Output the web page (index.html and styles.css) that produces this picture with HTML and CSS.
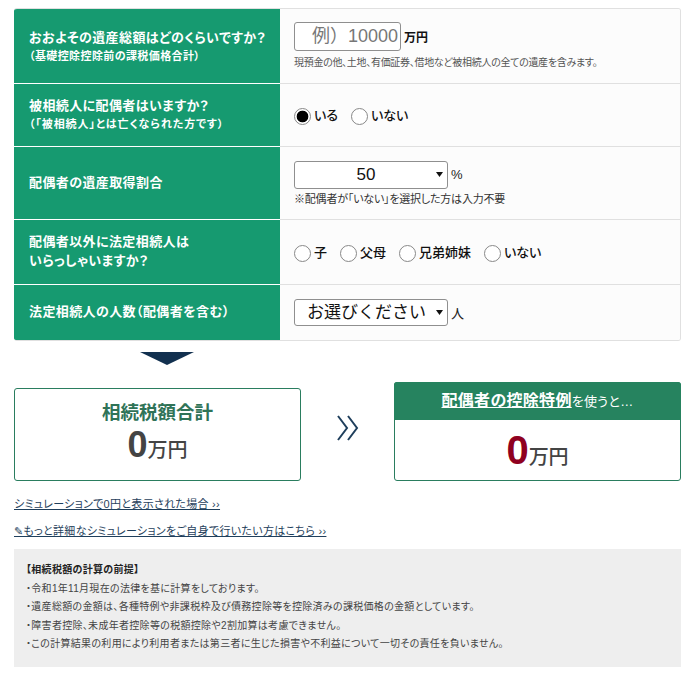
FILE: index.html
```html
<!DOCTYPE html>
<html lang="ja">
<head>
    <meta charset="UTF-8">
    <title>相続税額シミュレーション</title>
    <link rel="stylesheet" href="styles.css">
</head>
<body>
    <div class="sim-table">
        <div class="row row-1">
            <div class="label">おおよその遺産総額はどのくらいですか？<span class="sub">（基礎控除控除前の課税価格合計）</span></div>
            <div class="field">
                <div class="line">
                    <input class="amount" type="text" placeholder="例）10000">
                    <span class="unit">万円</span>
                </div>
                <p class="help help-gap">現預金の他、土地、有価証券、借地など被相続人の全ての遺産を含みます。</p>
            </div>
        </div>
        <div class="row row-2">
            <div class="label">被相続人に配偶者はいますか？<span class="sub">（「被相続人」とは亡くなられた方です）</span></div>
            <div class="field">
                <div class="radios">
                    <label class="radio"><input type="radio" name="spouse" checked>いる</label>
                    <label class="radio"><input type="radio" name="spouse">いない</label>
                </div>
            </div>
        </div>
        <div class="row row-3">
            <div class="label">配偶者の遺産取得割合</div>
            <div class="field">
                <div class="line">
                    <select class="ratio"><option>50</option></select>
                    <span class="unit plain">%</span>
                </div>
                <p class="help note">※配偶者が「いない」を選択した方は入力不要</p>
            </div>
        </div>
        <div class="row row-4">
            <div class="label">配偶者以外に法定相続人は<br>いらっしゃいますか？</div>
            <div class="field">
                <div class="radios">
                    <label class="radio"><input type="radio" name="heir">子</label>
                    <label class="radio"><input type="radio" name="heir">父母</label>
                    <label class="radio"><input type="radio" name="heir">兄弟姉妹</label>
                    <label class="radio"><input type="radio" name="heir">いない</label>
                </div>
            </div>
        </div>
        <div class="row row-5">
            <div class="label">法定相続人の人数（配偶者を含む）</div>
            <div class="field">
                <div class="line">
                    <select class="people"><option>お選びください</option></select>
                    <span class="unit plain">人</span>
                </div>
            </div>
        </div>
    </div>

    <div class="down-arrow"></div>

    <div class="results">
        <div class="result-box">
            <div class="result-title">相続税額合計</div>
            <div class="result-value"><b>0</b>万円</div>
        </div>
        <svg class="chevrons" width="24" height="26" viewBox="0 0 24 26">
            <path d="M2 1 L11 13 L2 25 M12 1 L21 13 L12 25" fill="none" stroke="#1f3f5c" stroke-width="2"/>
        </svg>
        <div class="result-box special">
            <div class="special-head"><a href="#">配偶者の控除特例</a><span>を使うと…</span></div>
            <div class="result-value"><b>0</b>万円</div>
        </div>
    </div>

    <p class="link-line"><a href="#">シミュレーションで0円と表示された場合 ››</a></p>
    <p class="link-line second"><a href="#">✎もっと詳細なシミュレーションをご自身で行いたい方はこちら ››</a></p>

    <div class="notes">
        <p class="notes-title">【相続税額の計算の前提】</p>
        <p>・令和1年11月現在の法律を基に計算をしております。</p>
        <p>・遺産総額の金額は、各種特例や非課税枠及び債務控除等を控除済みの課税価格の金額としています。</p>
        <p>・障害者控除、未成年者控除等の税額控除や2割加算は考慮できません。</p>
        <p>・この計算結果の利用により利用者または第三者に生じた損害や不利益について一切その責任を負いません。</p>
    </div>
</body>
</html>
```

FILE: styles.css
```css
body {
    margin: 0;
    padding: 8px 16px 0 14px;
    background: #fff;
    color: #333;
    font-family: "Liberation Sans", "Noto Sans CJK JP", sans-serif;
    font-feature-settings: "palt";
}
p {
    margin: 0;
}
.sim-table {
    border: 1px solid #e0e0e0;
    border-left: 0;
    border-radius: 3px;
    overflow: hidden;
}
.row {
    display: flex;
    border-bottom: 1px solid #e0e0e0;
}
.row:last-child {
    border-bottom: 0;
}
.row-1 { height: 74px; }
.row-2 { height: 62px; }
.row-3 { height: 72px; }
.row-4 { height: 64px; }
.row-5 { height: 55px; }
.label {
    width: 266px;
    flex-shrink: 0;
    box-sizing: border-box;
    margin-bottom: -1px;
    padding: 0 0 0 15px;
    background: #169a70;
    border-bottom: 1px solid #fff;
    color: #fff;
    font-size: 13px;
    font-weight: bold;
    line-height: 19px;
    letter-spacing: 0.4px;
    white-space: nowrap;
}
.row-1 .label { padding-top: 19px; }
.row-2 .label { padding-top: 12px; }
.row-3 .label { padding-top: 26px; }
.row-4 .label { padding-top: 12px; }
.row-5 .label { padding-top: 17px; }
.row:last-child .label {
    margin-bottom: 0;
    border-bottom: 0;
}
.sub {
    display: block;
    font-size: 11px;
    line-height: 18px;
}
.row-2 .sub {
    letter-spacing: 0.9px;
}
.field {
    flex: 1;
    padding: 0 14px;
    background: #fcfcfc;
    display: flex;
    flex-direction: column;
    justify-content: center;
}
.line {
    display: flex;
    align-items: center;
    gap: 3px;
}
.amount {
    width: 107px;
    height: 29px;
    box-sizing: border-box;
    padding: 0 2px;
    border: 1px solid #8f8f8f;
    border-radius: 3px;
    background: #fff;
    font: 18px "Liberation Sans", "Noto Sans CJK JP", sans-serif;
    text-align: right;
}
.amount::placeholder {
    color: #777;
}
.unit {
    color: #111;
    font-size: 12px;
    font-weight: bold;
}
.unit.plain {
    font-weight: normal;
    font-size: 13px;
    color: #222;
}
.help {
    font-size: 10px;
    line-height: 14px;
    letter-spacing: -0.3px;
    color: #555;
}
.help-gap {
    margin-top: 5px;
}
.note {
    margin-top: 3px;
    font-size: 11px;
    letter-spacing: -0.2px;
    color: #333;
}
select {
    appearance: none;
    height: 28px;
    border: 1px solid #8f8f8f;
    border-radius: 3px;
    background: #fff url("data:image/svg+xml,%3Csvg xmlns='http://www.w3.org/2000/svg' width='8' height='5'%3E%3Cpath d='M0 0h7L3.500 5z' fill='%23111'/%3E%3C/svg%3E") no-repeat right 3px center;
    color: #111;
    font: 17px "Liberation Sans", "Noto Sans CJK JP", sans-serif;
}
.ratio {
    width: 154px;
    text-align: center;
    text-align-last: center;
    padding-right: 10px;
}
.people {
    width: 154px;
    height: 27px;
    padding-left: 12px;
}
.radios {
    display: flex;
    gap: 13px;
    margin-top: -2px;
}
.radio {
    display: flex;
    align-items: center;
    gap: 3px;
    color: #111;
    font-size: 13px;
    font-weight: 500;
}
.radio input {
    appearance: none;
    width: 17px;
    height: 17px;
    margin: 4px 0 0;
    border: 1px solid #888;
    border-radius: 50%;
    background: #fff;
}
.radio input:checked {
    background: radial-gradient(circle, #000 0 5.5px, #fff 6.2px);
}
.down-arrow {
    width: 0;
    margin: 11px 0 0 126px;
    border-top: 13px solid #12304f;
    border-left: 27px solid transparent;
    border-right: 27px solid transparent;
}
.results {
    display: flex;
    align-items: flex-end;
    justify-content: space-between;
    margin-top: 17px;
}
.result-box {
    width: 287px;
    height: 93px;
    box-sizing: border-box;
    border: 1px solid #2a7d5f;
    border-radius: 3px;
    background: #fff;
    text-align: center;
}
.result-title {
    margin-top: 12px;
    color: #2f7357;
    font-size: 18.5px;
    font-weight: bold;
    line-height: 24px;
}
.result-value {
    color: #444;
    font-size: 20px;
    font-weight: 500;
    line-height: 40px;
}
.result-value b {
    font-size: 36px;
}
.chevrons {
    margin-bottom: 40px;
}
.special {
    height: 99px;
}
.special-head {
    height: 38px;
    margin: -1px -1px 0;
    background: #26835f;
    border-radius: 3px 3px 0 0;
    color: #fff;
    font-size: 13px;
    line-height: 38px;
    letter-spacing: 0.3px;
}
.special-head a {
    color: #fff;
    font-size: 16px;
    font-weight: bold;
}
.special .result-value {
    margin-top: 10px;
}
.special .result-value b {
    color: #8f0020;
    font-size: 40px;
}
.link-line {
    margin-top: 15px;
    font-size: 11px;
    line-height: 17px;
    letter-spacing: 0.3px;
}
.link-line.second {
    margin-top: 10px;
}
.link-line a {
    color: #1f3f5c;
}
.notes {
    margin-top: 9px;
    padding: 12px 12px 13px;
    background: #eee;
    color: #444;
    font-size: 10px;
    line-height: 18.5px;
    letter-spacing: 0.3px;
}
.notes-title {
    color: #222;
    font-weight: bold;
}
```
